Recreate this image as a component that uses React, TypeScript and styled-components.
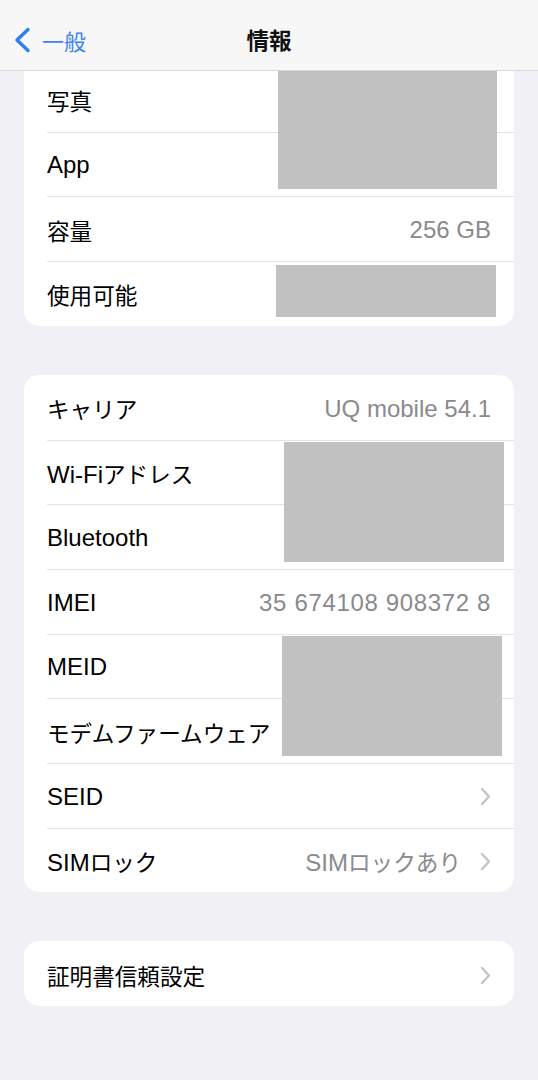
import * as React from "react";
import styled, { createGlobalStyle } from "styled-components";

const GlobalStyle = createGlobalStyle`
  html, body {
    margin: 0;
    padding: 0;
    background: #f0f0f5;
  }
  body {
    font-family: "Liberation Sans", "Noto Sans CJK JP", sans-serif;
    -webkit-font-smoothing: antialiased;
  }
`;

const Screen = styled.div`
  width: 538px;
  min-height: 1080px;
  background: #f0f0f5;
  overflow: hidden;
`;

const NavBar = styled.header`
  position: relative;
  z-index: 2;
  height: 71px;
  padding-top: 9px;
  box-sizing: border-box;
  background: #f7f7f7;
  border-bottom: 1px solid #d9d9d9;
  display: grid;
  grid-template-columns: 1fr auto 1fr;
  align-items: center;
`;

const BackButton = styled.div`
  display: flex;
  align-items: center;
  gap: 11px;
  padding-left: 13px;
  color: #3a82f6;
  font-size: 22px;
  svg {
    display: block;
  }
`;

const Title = styled.div`
  font-size: 22.6px;
  font-weight: 700;
  color: #111;
`;

const Content = styled.main`
  display: flex;
  flex-direction: column;
  gap: 49.3px;
  padding: 0 24px 60px;
  margin-top: -4px;
`;

const Card = styled.section<{ $flatTop?: boolean }>`
  position: relative;
  background: #fff;
  border-radius: ${(p) => (p.$flatTop ? "0 0 15px 15px" : "15px")};
  overflow: hidden;
`;

const RowWrap = styled.div`
  position: relative;
  height: 64.67px;
  box-sizing: border-box;
  display: flex;
  align-items: center;
  justify-content: space-between;
  padding: 3px 23px 0;
  font-size: 24px;

  & + &::before {
    content: "";
    position: absolute;
    top: 0;
    left: 23px;
    right: 0;
    height: 1px;
    background: #e3e3e6;
  }
`;

const Label = styled.span`
  color: #000;
  white-space: nowrap;
`;

const Value = styled.span`
  display: flex;
  align-items: center;
  gap: 19px;
  color: #8a8a8e;
  white-space: nowrap;
`;

const Ja = styled.span`
  font-size: 22.6px;
`;

const Digits = styled.span`
  letter-spacing: 0.65px;
`;

const Redaction = styled.div<{ $x: number; $y: number; $w: number; $h: number }>`
  position: absolute;
  left: ${(p) => p.$x}px;
  top: ${(p) => p.$y}px;
  width: ${(p) => p.$w}px;
  height: ${(p) => p.$h}px;
  background: #c1c1c1;
  z-index: 1;
`;

function Chevron() {
  return (
    <svg width="11" height="19" viewBox="0 0 11 19" fill="none">
      <path
        d="M2 2 L9 9.5 L2 17"
        stroke="#c4c4c7"
        strokeWidth="2.4"
        strokeLinecap="round"
        strokeLinejoin="round"
      />
    </svg>
  );
}

function BackChevron() {
  return (
    <svg width="18" height="26" viewBox="0 0 18 26" fill="none">
      <path
        d="M15 2.5 L4 13 L15 23.5"
        stroke="#2f7ef2"
        strokeWidth="3.4"
        strokeLinecap="round"
        strokeLinejoin="round"
      />
    </svg>
  );
}

type RowProps = {
  label: React.ReactNode;
  value?: React.ReactNode;
  chevron?: boolean;
};

function Row({ label, value, chevron }: RowProps) {
  return (
    <RowWrap>
      <Label>{label}</Label>
      <Value>
        {value}
        {chevron && <Chevron />}
      </Value>
    </RowWrap>
  );
}

export default function App() {
  return (
    <Screen>
      <GlobalStyle />
      <NavBar>
        <BackButton>
          <BackChevron />
          <span>一般</span>
        </BackButton>
        <Title>情報</Title>
        <div />
      </NavBar>

      <Content>
        <Card $flatTop>
          <Row label={<Ja>写真</Ja>} />
          <Row label="App" />
          <Row label={<Ja>容量</Ja>} value="256 GB" />
          <Row label={<Ja>使用可能</Ja>} />
          <Redaction $x={253.7} $y={2} $w={219.6} $h={120} />
          <Redaction $x={251.7} $y={198} $w={220.3} $h={52.3} />
        </Card>

        <Card>
          <Row label={<Ja>キャリア</Ja>} value="UQ mobile 54.1" />
          <Row label={<>Wi-Fi<Ja>アドレス</Ja></>} />
          <Row label="Bluetooth" />
          <Row label="IMEI" value={<Digits>35 674108 908372 8</Digits>} />
          <Row label="MEID" />
          <Row label={<Ja>モデムファームウェア</Ja>} />
          <Row label="SEID" chevron />
          <Row
            label={<>SIM<Ja>ロック</Ja></>}
            value={<span>SIM<Ja>ロックあり</Ja></span>}
            chevron
          />
          <Redaction $x={260} $y={67.3} $w={220} $h={120} />
          <Redaction $x={258} $y={260.7} $w={220} $h={120.6} />
        </Card>

        <Card>
          <Row label={<Ja>証明書信頼設定</Ja>} chevron />
        </Card>
      </Content>
    </Screen>
  );
}
